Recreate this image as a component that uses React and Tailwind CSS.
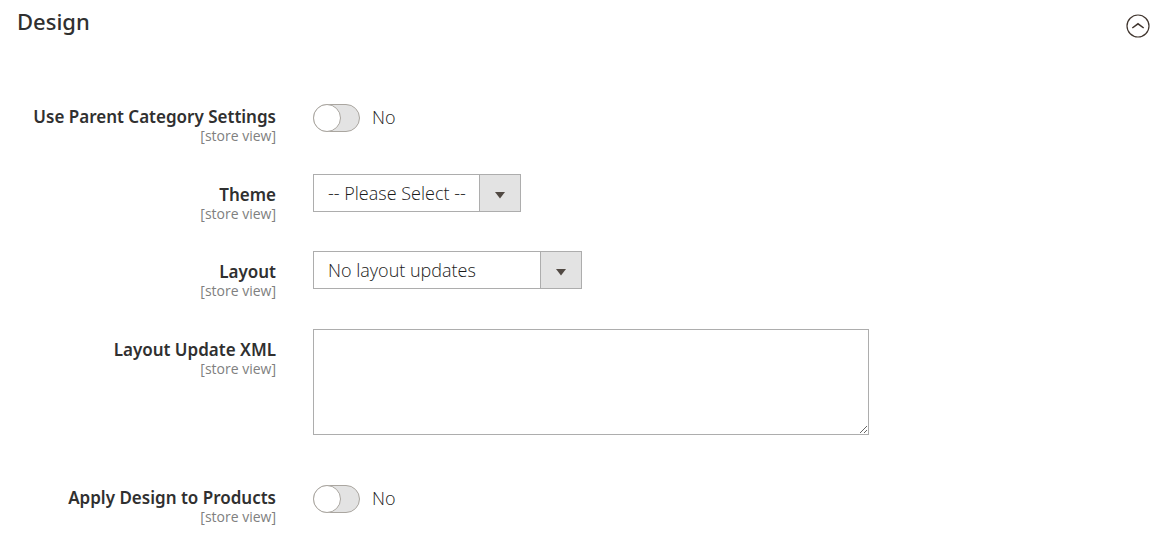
import { useState } from "react";

function Field({ id, label, className, children }) {
  return (
    <div className={`flex items-start gap-[37px] ${className}`}>
      <label htmlFor={id} className="flex w-64 shrink-0 flex-col text-right">
        <span className="font-['Noto_Sans',sans-serif] text-[17px] leading-[18px] font-semibold">{label}</span>
        <span className="text-[14px] leading-5 text-[#808080]">[store view]</span>
      </label>
      {children}
    </div>
  );
}

function Toggle({ id }) {
  const [on, setOn] = useState(false);
  return (
    <div className="-mt-1 flex items-center gap-3">
      <input
        id={id}
        type="checkbox"
        role="switch"
        checked={on}
        onChange={(e) => setOn(e.target.checked)}
        className="flex h-7 w-[47px] appearance-none rounded-full border border-[#aaa6a0] bg-[#e3e3e3] before:-my-px before:-ml-px before:size-7 before:rounded-full before:border before:border-[#aaa6a0] before:bg-white before:content-[''] checked:bg-[#79a22e] checked:before:ml-[18px]"
      />
      <span className="pb-0.5 text-[18px] leading-6 font-light text-[#1a1a1a]">{on ? "Yes" : "No"}</span>
    </div>
  );
}

function Select({ id, className, option }) {
  return (
    <div className={`grid h-[38px] ${className}`}>
      <select
        id={id}
        className="col-start-1 row-start-1 appearance-none border border-[#adadad] bg-white pr-11 pl-[14px] text-[18px] leading-6 font-light text-[#1a1a1a]"
      >
        <option>{option}</option>
      </select>
      <span className="pointer-events-none col-start-1 row-start-1 flex w-[42px] items-center justify-center justify-self-end border border-[#adadad] bg-[#e3e3e3]">
        <svg viewBox="0 0 12 8" className="mt-1 h-2 w-3" aria-hidden="true">
          <path d="M1 1h10L6 7.500z" fill="#514943" />
        </svg>
      </span>
    </div>
  );
}

export default function App() {
  return (
    <main className="bg-white pb-5 font-['Open_Sans',sans-serif] text-[#303030]">
      <header className="flex items-start justify-between px-[17px] pt-2">
        <h2 className="font-['Noto_Sans',sans-serif] text-[22px] leading-[26px] font-medium">Design</h2>
        <button type="button" aria-label="Collapse Design" className="mt-[6px]">
          <svg viewBox="0 0 24 24" className="size-6" fill="none" stroke="#41362f" aria-hidden="true">
            <circle cx="12" cy="12" r="11" strokeWidth="1.2" />
            <path d="M6.300 14 12 9.800l5.700 4.200" strokeWidth="1.5" />
          </svg>
        </button>
      </header>
      <form className="pt-[70px] pl-5">
        <Field id="parent" label="Use Parent Category Settings" className="h-[78px]">
          <Toggle id="parent" />
        </Field>
        <Field id="theme" label="Theme" className="h-[77px]">
          <Select id="theme" className="-mt-3 w-[208px]" option="-- Please Select --" />
        </Field>
        <Field id="layout" label="Layout" className="h-[78px]">
          <Select id="layout" className="-mt-3 w-[269px]" option="No layout updates" />
        </Field>
        <Field id="xml" label="Layout Update XML" className="h-[148px]">
          <textarea id="xml" className="-mt-3 block h-[106px] w-[556px] border border-[#adadad] p-2 text-[18px] font-light" />
        </Field>
        <Field id="apply" label="Apply Design to Products" className="">
          <Toggle id="apply" />
        </Field>
      </form>
    </main>
  );
}
